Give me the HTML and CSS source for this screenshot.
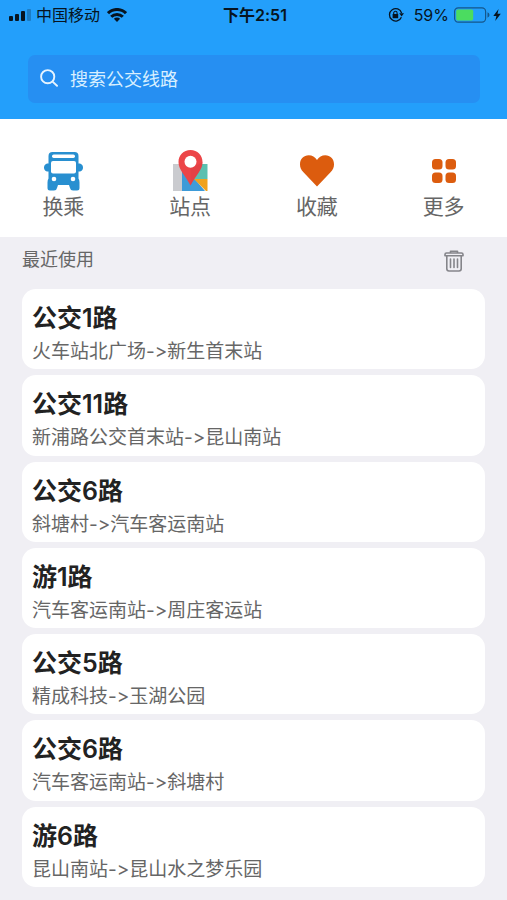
FILE: index.html
```html
<!DOCTYPE html>
<html lang="zh-CN">
<head>
<meta charset="utf-8">
<meta name="viewport" content="width=device-width, initial-scale=1">
<title>公交</title>
<link rel="stylesheet" href="styles.css">
</head>
<body>
<header class="top">
  <div class="status">
    <div class="status-side">
      <svg class="signal" viewBox="0 0 23 12" width="23" height="12" aria-hidden="true">
        <rect x="0" y="7" width="4" height="5" rx="1"/><rect x="6" y="5" width="4" height="7" rx="1"/><rect x="12" y="2" width="4" height="10" rx="1"/><rect x="18" y="0" width="4" height="12" rx="1" opacity=".25"/>
      </svg>
      <span class="carrier">中国移动</span>
      <svg class="wifi" viewBox="0 0 20 14" width="20" height="14" fill="none" stroke="#071420" stroke-width="3" aria-hidden="true">
        <path d="M1 5.200a12.700 12.700 0 0 1 18 0M4.200 8.800a8.200 8.200 0 0 1 11.600 0"/><path d="M10 14l-3.100-3.200a4.400 4.400 0 0 1 6.200 0z" fill="#071420" stroke="none"/>
      </svg>
    </div>
    <span class="time">下午2:51</span>
    <div class="status-side status-right">
      <svg class="lock" viewBox="0 0 16 16" width="16" height="16" aria-hidden="true">
        <path d="M13.400 10.200A6.200 6.200 0 1 1 13.600 6" fill="none" stroke="#071420" stroke-width="1.300"/><path d="M11.200 6.300h4.800l-2.400 3.200z"/><rect x="4.600" y="7" width="5.600" height="4.300" rx=".6"/><path d="M5.700 7.300V6a1.700 1.700 0 0 1 3.400 0v1.300" fill="none" stroke="#071420" stroke-width="1.100"/>
      </svg>
      <span class="percent">59%</span>
      <svg class="battery" viewBox="0 0 36 16" width="36" height="16" aria-hidden="true">
        <rect x=".6" y=".8" width="31" height="14.400" rx="3.600" fill="none" stroke="#15578b" stroke-width="1.200"/><rect x="2.200" y="2.600" width="17" height="10.800" rx="1.600" fill="#4bdc60"/><path d="M33.500 5.300q2 .8 2 2.700t-2 2.700z" fill="#15578b"/>
      </svg>
      <svg class="bolt" viewBox="0 0 8 12" width="8" height="12" aria-hidden="true"><path d="M5.600 0L.3 7h3.100L2.200 12 7.800 4.800H4.500z"/></svg>
    </div>
  </div>
  <form class="search" role="search">
    <svg viewBox="0 0 18 18" width="18" height="18" fill="none" stroke="#e6f4ff" stroke-width="1.900" stroke-linecap="round" aria-hidden="true"><circle cx="7.700" cy="7.700" r="6.600"/><path d="M12.600 12.600l4.400 4.200"/></svg>
    <input type="search" placeholder="搜索公交线路" aria-label="搜索公交线路">
  </form>
</header>

<nav class="menu">
  <a href="#transfer">
    <svg viewBox="0 0 40 40" width="40" height="40" aria-hidden="true">
      <path fill="#288fd0" d="M9.500 1h22q4 0 4 4v7.500h1.500q3 1 3 4t-3 4h-1.500v7q1 1.500 1 4V37q0 2.500-2.500 2.500h-4q-2.500 0-3-2.500l-1-3H15l-1 3q-.5 2.500-3 2.500H7Q4.500 39.500 4.500 37v-5.500q0-2.500 1-4v-7H4q-3-1-3-4t3-4h1.500V5q0-4 4-4z"/>
      <g fill="#fff"><rect x="9" y="3.500" width="23" height="3.500" rx="1.700"/><rect x="8" y="10" width="25" height="12.500" rx="2"/><circle cx="11" cy="28" r="2.300"/><circle cx="30" cy="28" r="2.300"/></g>
    </svg>
    <span>换乘</span>
  </a>
  <a href="#stops">
    <svg viewBox="0 0 40 44" width="40" height="44" aria-hidden="true">
      <rect x="3" y="15" width="10" height="27" fill="#cacbcf"/><path fill="#3e9bd8" d="M12 15h12v14l11 13H12z"/><path fill="#5bc0b0" d="M24 15h13.500v15H24z"/><path fill="#f0a21d" d="M24 30h13.500v12H36z"/>
      <path fill="#ec4548" d="M20.500 1C13.500 1 8.500 6.200 8.500 13c0 8 7 13.500 12 23.500 5-10 12-15.500 12-23.500 0-6.800-5-12-12-12z"/><path fill="#d93b43" d="M20.500 19v17.500c5-10 12-15.500 12-23.500L26 17z" opacity=".45"/><circle cx="20.500" cy="12.700" r="6" fill="#fff"/>
    </svg>
    <span>站点</span>
  </a>
  <a href="#favorites">
    <svg viewBox="0 0 36 40" width="36" height="40" aria-hidden="true"><path fill="#dc5c0e" d="M18 35.500L4.700 21.500C1.900 18.500 1 16.300 1 13.200 1 8 4.800 4.300 9.700 4.300c3.500 0 6.300 1.700 8.300 4.600 2-2.900 4.800-4.600 8.300-4.600 4.900 0 8.700 3.700 8.700 8.900 0 3.100-.9 5.300-3.700 8.300z"/></svg>
    <span>收藏</span>
  </a>
  <a href="#more">
    <svg viewBox="0 0 24 36" width="24" height="36" fill="#dc5c0e" aria-hidden="true"><rect y="6" width="10.500" height="10.500" rx="3.500"/><rect x="13.500" y="6" width="10.500" height="10.500" rx="3.500"/><rect y="19.500" width="10.500" height="10.500" rx="3.500"/><rect x="13.500" y="19.500" width="10.500" height="10.500" rx="3.500"/></svg>
    <span>更多</span>
  </a>
</nav>

<main>
  <div class="recent">
    <h1>最近使用</h1>
    <button type="button" aria-label="清空">
      <svg viewBox="0 0 20 22" width="20" height="22" fill="none" stroke="#85858a" stroke-width="1.600" stroke-linecap="round" stroke-linejoin="round" aria-hidden="true"><path d="M6.500 3V1.200h7V3M1 5.800V4.500Q1 3 2.500 3h15Q19 3 19 4.500v1.300zM2.800 6v12.800Q2.800 21 5 21h10q2.200 0 2.200-2.200V6"/><path d="M6.500 9v8.500M10 9v8.500M13.500 9v8.500"/></svg>
    </button>
  </div>
  <ul class="routes">
    <li><a href="#r1"><h2>公交1路</h2><p>火车站北广场-&gt;新生首末站</p></a></li>
    <li><a href="#r2"><h2>公交11路</h2><p>新浦路公交首末站-&gt;昆山南站</p></a></li>
    <li><a href="#r3"><h2>公交6路</h2><p>斜塘村-&gt;汽车客运南站</p></a></li>
    <li><a href="#r4"><h2>游1路</h2><p>汽车客运南站-&gt;周庄客运站</p></a></li>
    <li><a href="#r5"><h2>公交5路</h2><p>精成科技-&gt;玉湖公园</p></a></li>
    <li><a href="#r6"><h2>公交6路</h2><p>汽车客运南站-&gt;斜塘村</p></a></li>
    <li><a href="#r7"><h2>游6路</h2><p>昆山南站-&gt;昆山水之梦乐园</p></a></li>
  </ul>
</main>
</body>
</html>
```
FILE: styles.css
```css
* {
  box-sizing: border-box;
}

body {
  margin: 0;
  min-height: 100vh;
  display: flex;
  flex-direction: column;
  background: #f0eff4;
  color: #666;
  font-family: Inter, "Noto Sans CJK SC", sans-serif;
  font-variant-ligatures: none;
}

h1, h2, p, ul {
  margin: 0;
  padding: 0;
}

a {
  color: inherit;
  text-decoration: none;
}

svg {
  display: block;
  flex: none;
}

.top {
  background: #239ffb;
  padding-bottom: 16px;
}

.status {
  display: flex;
  align-items: center;
  height: 30px;
  padding: 0 6px 0 9px;
  color: #071420;
  fill: #071420;
  font-size: 16px;
  line-height: 30px;
}

.status-side {
  flex: 1;
  display: flex;
  align-items: center;
}

.status-right {
  justify-content: flex-end;
}

.carrier {
  margin: 0 7px 0 4px;
  font-size: 16px;
}

.time {
  font-weight: 600;
}

.percent {
  margin: 0 5px 0 10px;
}

.bolt {
  margin-left: 3px;
}

.search {
  display: flex;
  align-items: center;
  gap: 12px;
  height: 48px;
  margin: 25px 27px 0 28px;
  padding: 0 12px;
  border-radius: 7px;
  background: #268ff2;
}

.search svg {
  margin-bottom: 3px;
}

.search input {
  flex: 1;
  min-width: 0;
  padding: 0;
  border: 0;
  outline: 0;
  background: none;
  color: #fff;
  font: inherit;
  font-size: 18px;
}

.search input::placeholder {
  color: #d9efff;
  opacity: 1;
}

.menu {
  display: grid;
  grid-template-columns: repeat(4, 1fr);
  height: 118px;
  background: #fff;
}

.menu a {
  display: grid;
  grid-template-rows: 44px 28px;
  place-items: center;
  align-content: start;
  padding-top: 30px;
  font-size: 21px;
  line-height: 28px;
}

main {
  flex: 1;
  display: flex;
  flex-direction: column;
}

.recent {
  display: flex;
  align-items: center;
  justify-content: space-between;
  height: 52px;
  padding: 0 43px 4px 22px;
}

.recent h1 {
  font-size: 18px;
  font-weight: 400;
  line-height: 28px;
  padding-bottom: 2px;
}

.recent button {
  padding: 0;
  border: 0;
  background: none;
}

.routes {
  flex: 1;
  display: flex;
  flex-direction: column;
  gap: 6px;
  padding: 0 22px 13px;
  list-style: none;
}

.routes li {
  flex: 1;
  border-radius: 14px;
  background: #fff;
}

.routes a {
  display: block;
  padding: 11px 10px 2px;
}

.routes h2 {
  color: #222;
  font-size: 25px;
  line-height: 37px;
  font-weight: 600;
}

.routes p {
  font-size: 19px;
  line-height: 30px;
}
```
